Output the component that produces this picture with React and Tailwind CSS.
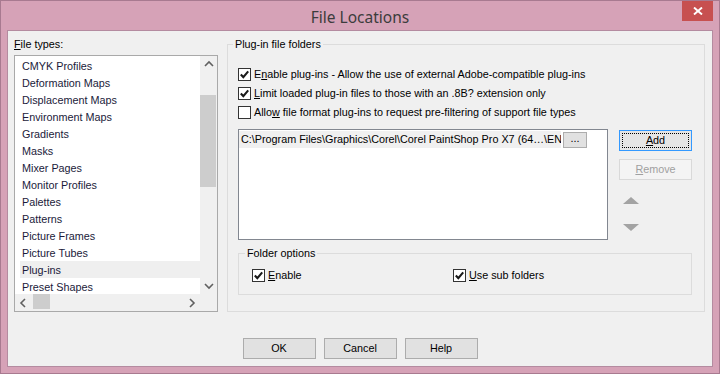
import React from "react";

function Check({ checked }) {
  return (
    <span className="w-[13px] h-[13px] border border-[#333333] bg-white flex items-center justify-center shrink-0">
      {checked && (
        <svg width="11" height="11" viewBox="0 0 11 11">
          <path d="M1.8 5.6 L4.3 8.1 L9.2 2.4" stroke="#1a1a1a" strokeWidth="2.1" fill="none" />
        </svg>
      )}
    </span>
  );
}

function CheckRow({ checked, children }) {
  return (
    <div className="flex items-center h-[19px] gap-[3px]">
      <Check checked={checked} />
      <span className="whitespace-nowrap">{children}</span>
    </div>
  );
}

function Chevron({ dir }) {
  const pts = {
    up: "4,9 8,5 12,9",
    down: "4,6 8,10 12,6",
    left: "9,4 5,8 9,12",
    right: "6,4 10,8 6,12",
  }[dir];
  return (
    <svg width="16" height="16" viewBox="0 0 16 16">
      <polyline points={pts} stroke="#606060" strokeWidth="1.6" fill="none" />
    </svg>
  );
}

const items = [
  "CMYK Profiles",
  "Deformation Maps",
  "Displacement Maps",
  "Environment Maps",
  "Gradients",
  "Masks",
  "Mixer Pages",
  "Monitor Profiles",
  "Palettes",
  "Patterns",
  "Picture Frames",
  "Picture Tubes",
  "Plug-ins",
  "Preset Shapes",
];

function Btn({ children, className = "" }) {
  return (
    <div
      className={
        "w-[73px] h-[21px] border border-[#acacac] bg-[#e1e1e1] flex items-center justify-center " +
        className
      }
    >
      {children}
    </div>
  );
}

export default function App() {
  return (
    <div className="w-[720px] h-[374px] bg-[#d6a2b7] border border-[#a87a90] flex flex-col font-['Liberation_Sans',Arial,sans-serif] text-[10.8px] text-black leading-[13px]">
      {/* Title bar */}
      <div className="h-[29px] relative flex items-center justify-center">
        <span className="font-['Noto_Sans',sans-serif] text-[15.5px] text-[#3c3c3c] leading-[20px] pt-[2px]">
          File Locations
        </span>
        <div className="absolute right-[6px] top-0 w-[31px] h-[20px] bg-[#c75050] flex items-center justify-center">
          <svg width="10" height="8" viewBox="0 0 10 8">
            <path d="M1 0.5 L9 7.5 M9 0.5 L1 7.5" stroke="white" strokeWidth="1.9" />
          </svg>
        </div>
      </div>

      {/* Client area */}
      <div className="mx-[6px] h-[337px] border border-[#b48ba0] bg-[#f0f0f0] flex flex-col">
        <div className="flex pl-[6px] pt-[7px] gap-[9px]">
          {/* Left column */}
          <div className="flex flex-col w-[204px]">
            <div className="h-[13px]">
              <u>F</u>ile types:
            </div>
            <div className="mt-[4px] h-[257px] border border-[#a9a9a9] bg-white grid grid-cols-[1fr_17px] grid-rows-[1fr_17px]">
              <div className="pt-[1px] pl-[5px] overflow-hidden">
                {items.map((it) => (
                  <div
                    key={it}
                    className={
                      "h-[17px] flex items-center px-[2px] pt-[1px] whitespace-nowrap text-[#1a1a3a] " +
                      (it === "Plug-ins" ? "bg-[#efefef]" : "")
                    }
                  >
                    {it}
                  </div>
                ))}
              </div>
              <div className="flex flex-col bg-[#f0f0f0]">
                <div className="h-[17px] flex items-center justify-center">
                  <Chevron dir="up" />
                </div>
                <div className="h-[22px]" />
                <div className="h-[92px] bg-[#cdcdcd] mr-[1px]" />
                <div className="flex-1" />
                <div className="h-[17px] flex items-center justify-center">
                  <Chevron dir="down" />
                </div>
              </div>
              <div className="flex bg-[#f0f0f0]">
                <div className="w-[17px] flex items-center justify-center">
                  <Chevron dir="left" />
                </div>
                <div className="w-[17px] ml-[1px] bg-[#cdcdcd] mb-[2px]" />
                <div className="flex-1" />
                <div className="w-[17px] flex items-center justify-center">
                  <Chevron dir="right" />
                </div>
              </div>
              <div className="bg-[#f0f0f0]" />
            </div>
          </div>

          {/* Right group */}
          <fieldset className="w-[478px] h-[274px] border border-[#dcdcdc] p-0">
            <legend className="ml-[5px] px-[2px] leading-[13px]">Plug-in file folders</legend>
            <div className="pl-[10px] pr-[11px]">
              <div className="mt-[14px] flex flex-col">
                <CheckRow checked>
                  E<u>n</u>able plug-ins - Allow the use of external Adobe-compatible plug-ins
                </CheckRow>
                <CheckRow checked>
                  <u>L</u>imit loaded plug-in files to those with an .8B? extension only
                </CheckRow>
                <CheckRow>
                  Allo<u>w</u> file format plug-ins to request pre-filtering of support file types
                </CheckRow>
              </div>
              <div className="mt-[7px] flex gap-[11px]">
                <div className="w-[370px] h-[111px] border border-[#828790] bg-white pt-[1px]">
                  <div className="flex items-center">
                    <div className="w-[322px] h-[17px] bg-[#f0f0f0] pl-[2px] flex items-center whitespace-nowrap overflow-hidden">
                      C:\Program Files\Graphics\Corel\Corel PaintShop Pro X7 (64…\EN
                    </div>
                    <div className="ml-[2px] w-[24px] h-[16px] border border-[#adadad] bg-[#e1e1e1] flex items-center justify-center leading-[10px] pb-[3px]">
                      ...
                    </div>
                  </div>
                </div>
                <div className="flex flex-col pt-[1px]">
                  <div className="w-[73px] h-[21px] border border-[#3399ff] bg-[#e5e5e5] p-[2px]">
                    <div className="w-full h-full border border-dotted border-black flex items-center justify-center">
                      <span>
                        <u>A</u>dd
                      </span>
                    </div>
                  </div>
                  <div className="mt-[8px] w-[73px] h-[21px] border border-[#d9d9d9] bg-[#f4f4f4] flex items-center justify-center text-[#a0a0a0]">
                    <span>
                      <u>R</u>emove
                    </span>
                  </div>
                  <div className="mt-[17px] ml-[4px] flex flex-col gap-[20px]">
                    <svg width="16" height="7" viewBox="0 0 16 7">
                      <polygon points="0,7 8,0 16,7" fill="#a3a3a3" />
                    </svg>
                    <svg width="16" height="7" viewBox="0 0 16 7">
                      <polygon points="0,0 16,0 8,7" fill="#a3a3a3" />
                    </svg>
                  </div>
                </div>
              </div>
              <fieldset className="mt-[7px] w-[454px] h-[48px] border border-[#dcdcdc] p-0">
                <legend className="ml-[6px] px-[2px] leading-[13px]">Folder options</legend>
                <div className="mt-[6px] pl-[13px] grid grid-cols-[201px_1fr]">
                  <CheckRow checked>
                    <u>E</u>nable
                  </CheckRow>
                  <CheckRow checked>
                    <u>U</u>se sub folders
                  </CheckRow>
                </div>
              </fieldset>
            </div>
          </fieldset>
        </div>

        {/* Bottom buttons */}
        <div className="mt-[26px] flex justify-center gap-[8px]">
          <Btn>OK</Btn>
          <Btn>Cancel</Btn>
          <Btn>Help</Btn>
        </div>
      </div>
    </div>
  );
}
